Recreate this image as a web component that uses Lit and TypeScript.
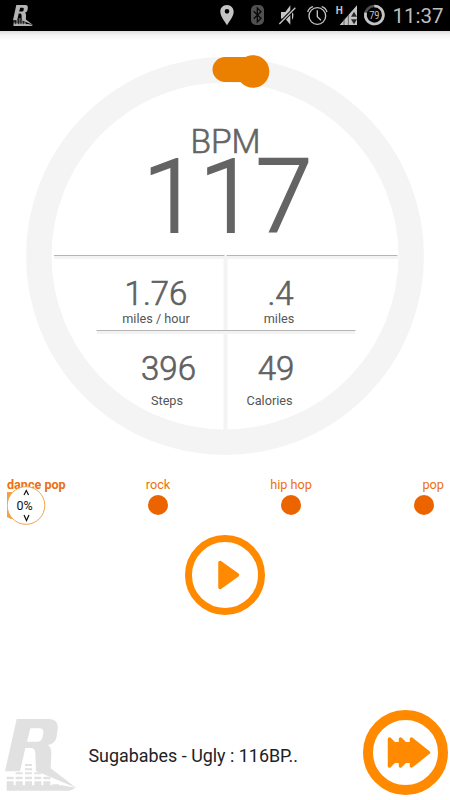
import { LitElement, html, css, svg } from "lit";
import { customElement, property } from "lit/decorators.js";

const logoShape = svg`
  <path fill-rule="evenodd" d="M50 56H148Q176 58 173 86L170 108Q167 130 143 135Q155 140 154 162L152 204L228 262L108 212L106 160Q106 143 92 143H76L60 213H15ZM91 84L81 124H112Q124 124 127 113L130 98Q131 84 119 84Z"/>
  <path d="M75 191h21v6H75zM75 204h21v6H75zM47 216h21v6H47zM75 216h21v6H75zM103 216h21v6h-21zM20 229h21v8H20zM47 229h21v8H47zM75 229h21v8H75zM103 229h21v8h-21zM130 229h21v8h-21z"/>
  <path d="M20 243h21v12h6v-12h21v12h7v-12h21v12h7v-12h21v12h6v-12h21v12h6v-3h20v3h8l43 7-20 9H20z"/>`;

@customElement("brand-logo")
export class BrandLogo extends LitElement {
  static styles = css`
    :host { display: block; }
    svg { display: block; width: 100%; height: 100%; fill: currentColor; }
  `;
  render() {
    return html`<svg viewBox="15 56 213 216" preserveAspectRatio="none">${logoShape}</svg>`;
  }
}

@customElement("status-bar")
export class StatusBar extends LitElement {
  static styles = css`
    :host { display: flex; height: 31px; background: #000; color: #bebebe; }
    .logo { width: 20px; height: 21px; margin: 5px 0 0 13px; color: #b4b4b4; }
    .icons { display: block; width: 178px; height: 31px; margin-left: 177px; }
    .time { font: 20.5px/31px Roboto, sans-serif; margin-left: 4.5px; padding-top: 1px; height: 30px; }
    .h { font: 700 30px Roboto, sans-serif; }
    .level { font: 32px Roboto, sans-serif; }
  `;
  render() {
    return html`
      <brand-logo class="logo"></brand-logo>
      <svg class="icons" viewBox="0 0 534 93" fill="#c4c4c4">
        <path fill-rule="evenodd" d="M51 15C38 15 31 24 31 35C31 49 44 63 51 76C58 63 71 49 71 35C71 24 63 15 51 15ZM51 27a7 7 0 1 1 0 14a7 7 0 1 1 0-14Z"/>
        <rect x="123" y="15" width="39" height="60" rx="15" fill="#505050"/>
        <path d="M131 34L153 55L142 66V24L153 35L131 56" fill="none" stroke="#080808" stroke-width="4"/>
        <path d="M213 36h13l15-20V74l-15-18h-13zM246 32q9 14 0 28z"/>
        <path d="M208 72L256 23" stroke="#000" stroke-width="10"/>
        <path d="M208 72L256 23" stroke="#c4c4c4" stroke-width="4"/>
        <g fill="none" stroke="#c4c4c4" stroke-width="4">
          <circle cx="322" cy="48" r="25"/><path d="M322 31V50L333 61M293 36Q297 23 309 20M335 20Q347 23 351 36"/>
        </g>
        <text class="h" x="377" y="43">H</text>
        <path d="M389 75L441 16V75Z"/>
        <path d="M402 55V75M415 43V75" stroke="#333" stroke-width="2"/>
        <path d="M432 35l9 15h-18zM432 73l9-15h-18z" fill="#282828"/>
        <circle cx="493" cy="45" r="27" fill="none" stroke="#505050" stroke-width="8"/>
        <path d="M493 18A27 27 0 1 1 467 38" fill="none" stroke="#c4c4c4" stroke-width="8"/>
        <text class="level" x="493" y="56" text-anchor="middle" textLength="31" lengthAdjust="spacingAndGlyphs">79</text>
      </svg>
      <span class="time">11:37</span>
    `;
  }
}

@customElement("workout-dial")
export class WorkoutDial extends LitElement {
  static styles = css`
    :host { display: grid; width: 398px; height: 399px; font-family: Roboto, sans-serif; color: #646464; }
    .ring, .readout { grid-area: 1 / 1; }
    .ring { display: block; width: 398px; height: 399px; overflow: visible; }
    .readout { display: grid; grid-template-rows: 200px 75px 100px; grid-template-columns: 199px 199px; }
    .tempo { grid-column: 1 / 3; text-align: center; }
    .unit { font-size: 33.5px; line-height: 34px; padding: 68px 0 0 1px; font-weight: 300; -webkit-text-stroke: 0.6px #646464; }
    .value { font-size: 102px; line-height: 74px; padding-left: 5px; margin-top: 1px; font-weight: 300; -webkit-text-stroke: 2px #646464; }
    .stat { display: flex; flex-direction: column; align-items: center; box-sizing: border-box; padding-top: 17px; }
    .number { font-size: 33px; line-height: 40px; font-weight: 300; -webkit-text-stroke: 0.6px #5c5c5c; }
    .label { font-size: 12.7px; line-height: 14px; color: #555; margin-top: -2px; }
    .speed { padding-left: 61px; }
    .distance { padding-right: 91px; }
    .distance .number { padding-left: 3px; }
    .steps { padding-left: 86px; }
    .steps .label { margin-top: 5px; padding-right: 3px; }
    .calories { padding-right: 97px; }
    .calories .label { margin-top: 5px; padding-right: 13px; }
  `;
  render() {
    return html`
      <svg class="ring" viewBox="26 57 398 399">
        <circle cx="225" cy="256" r="186.2" fill="none" stroke="#f4f4f4" stroke-width="25.5"/>
        <path d="M54 257.5H398M97 332.5H355" stroke="#f3f3f3" stroke-width="3"/>
        <path d="M225.5 259V431" stroke="#f4f4f4" stroke-width="4"/>
        <path d="M54 255.5H224.5M226.5 255.5H397.5M96.500 330.500H355.500" stroke="#b5b5b5" stroke-width="1.2"/>
        <path d="M225 57H246Q252 55 257 56V87L241 82H225A12.500 12.500 0 0 1 225 57Z" fill="#eb7f00"/>
        <circle cx="253" cy="71.500" r="16.300" fill="#eb7f00"/>
      </svg>
      <div class="readout">
        <div class="tempo">
          <div class="unit">BPM</div>
          <div class="value">117</div>
        </div>
        <div class="stat speed"><span class="number">1.76</span><span class="label">miles / hour</span></div>
        <div class="stat distance"><span class="number">.4</span><span class="label">miles</span></div>
        <div class="stat steps"><span class="number">396</span><span class="label">Steps</span></div>
        <div class="stat calories"><span class="number">49</span><span class="label">Calories</span></div>
      </div>
    `;
  }
}

@customElement("genre-slider")
export class GenreSlider extends LitElement {
  static styles = css`
    :host { display: grid; grid-template-columns: 84px 133px 133px 93px; padding-left: 7px; height: 50px; position: relative;
      font: 12.7px/16px Roboto, sans-serif; color: #eb7010; }
    .genre { display: flex; flex-direction: column; align-items: center; gap: 2px; }
    .first { align-items: flex-start; font-weight: 700; font-size: 12.6px; }
    .last { padding-left: 43px; align-items: flex-start; }
    .name { padding-left: 1px; }
    .first .name { padding-left: 0; }
    .last .name { padding-left: 22.5px; }
    .dot { width: 20px; height: 20px; margin-left: 0.5px; border-radius: 50%; background: #eb6400; }
    .last .dot { margin-left: 14px; }
    .knob { position: absolute; left: 7px; top: 8px; width: 40px; height: 40px; }
    .glyph { font: 12.5px Roboto, sans-serif; fill: #111; }
  `;
  render() {
    return html`
      <div class="genre first"><span class="name">dance pop</span></div>
      <div class="genre"><span class="name">rock</span><i class="dot"></i></div>
      <div class="genre"><span class="name">hip hop</span><i class="dot"></i></div>
      <div class="genre last"><span class="name">pop</span><i class="dot"></i></div>
      <svg class="knob" viewBox="7 485 40 40">
        <path d="M7 492H14V519H11L7 517Z" fill="#f2a040"/>
        <circle cx="26" cy="505.500" r="18.800" fill="#fff" stroke="#f0a550"/>
        <text class="glyph" x="24.500" y="509.500" text-anchor="middle">0%</text>
        <path d="M24 495L26.300 490.500L28.600 495M24 515L26.500 520.500L29 515" fill="none" stroke="#111" stroke-width="1.200"/>
      </svg>
    `;
  }
}

@customElement("app-root")
export class AppRoot extends LitElement {
  @property() track = "Sugababes - Ugly : 116BP..";

  static styles = css`
    :host { display: flex; flex-direction: column; width: 450px; height: 800px; overflow: hidden; background: #fff; }
    .shade { height: 10px; background: linear-gradient(#dcdcdc, #f4f4f4 40%, #fff); flex: none; }
    .dial { margin: 16px 0 0 26px; flex: none; }
    .genres { margin-top: 21px; flex: none; box-sizing: border-box; }
    .play { display: block; width: 80px; height: 80px; margin: 8px auto 0; flex: none; }
    .player { display: flex; align-items: flex-start; margin-top: 95px; height: 90px; }
    .logo { width: 71px; height: 72px; margin: 9px 0 0 5px; color: #e1e1e1; }
    .track { flex: 1; margin: 34px 0 0 12.5px; font: 17.9px/24px Roboto, sans-serif; color: #1c2226; white-space: nowrap; }
    .skip { display: block; width: 85px; height: 85px; margin-right: 2.500px; }
  `;
  render() {
    return html`
      <status-bar></status-bar>
      <div class="shade"></div>
      <workout-dial class="dial"></workout-dial>
      <genre-slider class="genres"></genre-slider>
      <svg class="play" viewBox="0 0 80 80">
        <circle cx="40" cy="40" r="36.500" fill="none" stroke="#ff8a00" stroke-width="7"/>
        <path d="M35 27.500L52.500 40L35 52.500Z" fill="#ff8a00" stroke="#ff8a00" stroke-width="3.500" stroke-linejoin="round"/>
      </svg>
      <div class="player">
        <brand-logo class="logo"></brand-logo>
        <span class="track">${this.track}</span>
        <svg class="skip" viewBox="0 0 85 85">
          <circle cx="42.500" cy="42.500" r="37.500" fill="none" stroke="#ff8a00" stroke-width="10"/>
          <path d="M26.500 29L40 42.500L26.500 56ZM37.500 29L51 42.500L37.500 56ZM48.500 29L65.500 42.500L48.500 56Z" fill="#ff8a00" stroke="#ff8a00" stroke-width="3.500" stroke-linejoin="round"/>
          <path d="M26.500 32H50V53H26.500Z" fill="#ff8a00"/>
        </svg>
      </div>
    `;
  }
}
